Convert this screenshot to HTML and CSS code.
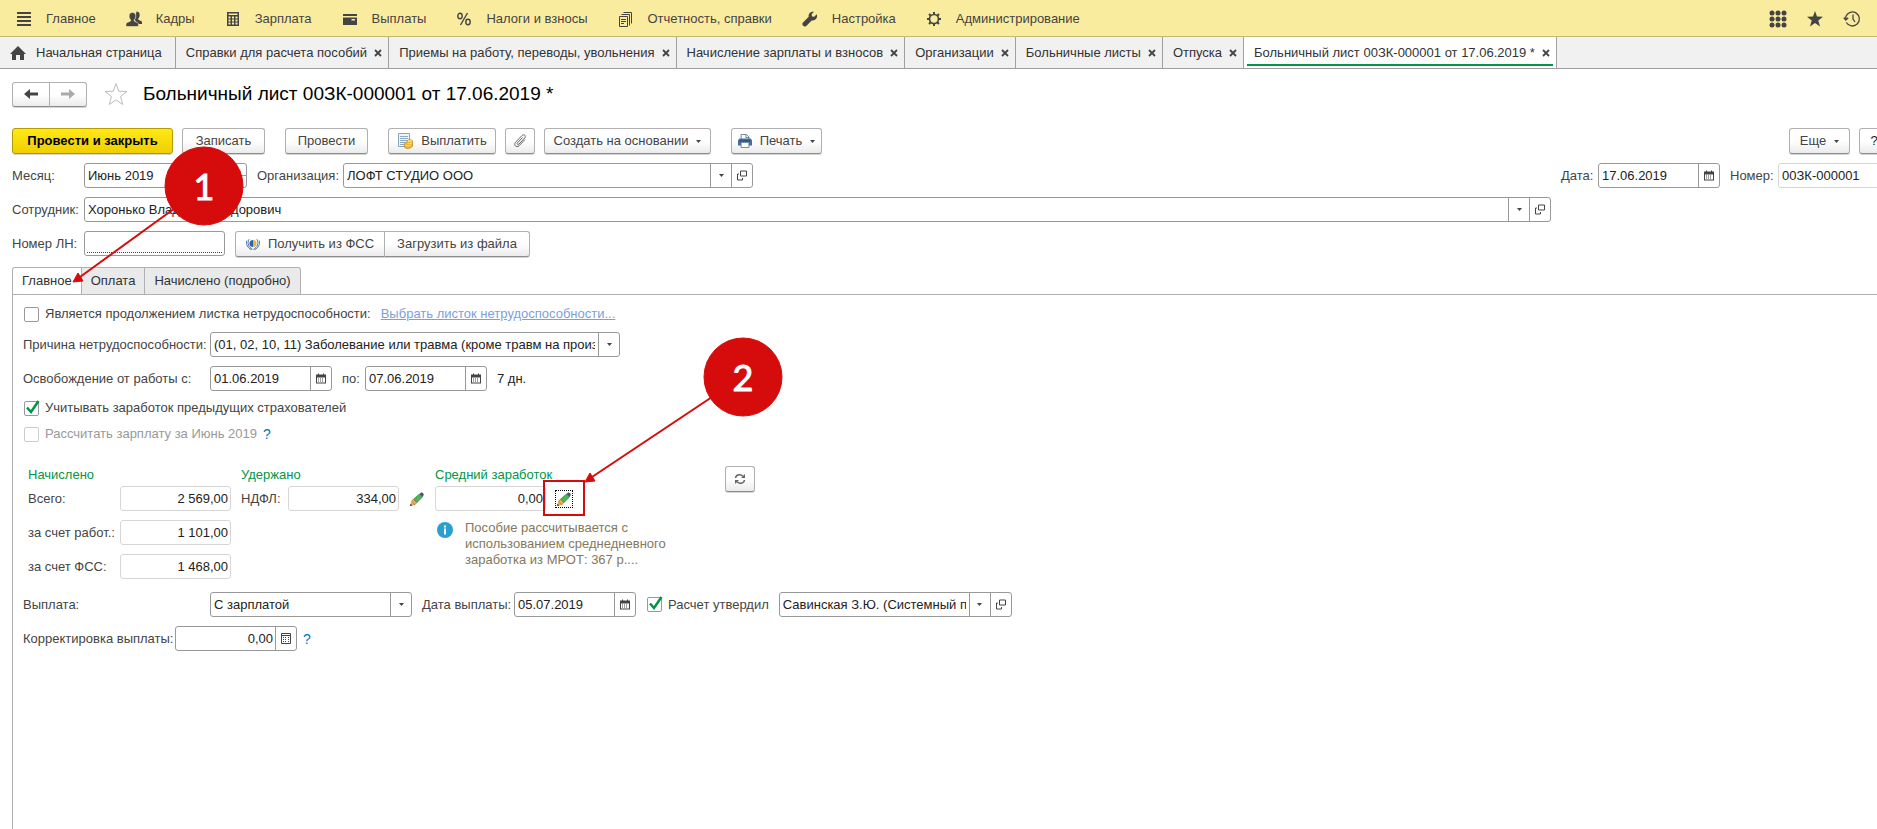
FILE: index.html
```html
<!DOCTYPE html>
<html lang="ru">
<head>
<meta charset="utf-8">
<title>Больничный лист 00ЗК-000001 от 17.06.2019</title>
<link rel="stylesheet" href="styles.css">
</head>
<body>
<svg class="sprite" aria-hidden="true">
  <symbol id="i-drop" viewBox="0 0 5 3"><path d="M0 0h5L2.500 3z" fill="#444"/></symbol>
  <symbol id="i-open" viewBox="0 0 10 10"><path d="M3.500 0.500h6v5h-6zM2 3.500H.5v6h5V7.500" fill="none" stroke="#444"/></symbol>
  <symbol id="i-cal" viewBox="0 0 10 10"><path d="M0 1h2V0h1v1h4V0h1v1h2v9H0z" fill="#444"/><path d="M1 4h8v5H1z" fill="#fff"/><path d="M2 5h1v1H2zm2 0h1v1H4zm2 0h1v1H6zM2 7h1v1H2zm2 0h1v1H4zm2 0h1v1H6z" fill="#444"/></symbol>
  <symbol id="i-calc" viewBox="0 0 10 11"><path d="M.5.500h9v10h-9zM1 2.500h8" fill="none" stroke="#444"/><path d="M2 4h1v1H2zm2 0h1v1H4zm3 0h1v1H7zM2 6h1v1H2zm2 0h1v1H4zm3 0h1v1H7zM2 8h1v1H2zm2 0h1v1H4zm3 0h1v1H7z" fill="#444"/></symbol>
  <symbol id="i-x" viewBox="0 0 8 8"><path d="M1 1l6 6M7 1L1 7" stroke="#444" stroke-width="1.800"/></symbol>
  <symbol id="i-pencil" viewBox="0 0 16 16"><path d="M1 15l1.200-4.500L5.500 14z" fill="#f0ad4e"/><path d="M1 15l.6-2.300 1.700 1.700z" fill="#333"/><path d="M4.500 8.200L10.500 3l3 3-5.800 5.800z" fill="#4eb656" stroke="#2f7f45" stroke-width=".7"/><path d="M2.500 10l2-1.800 3.200 3.300L5.500 14z" fill="#f0ad4e" stroke="#916324" stroke-width=".6"/><path d="M10.500 3l1.700-1.500c1-.6 3 1.200 2.500 2.500L13.500 6z" fill="#44566a"/></symbol>
</svg>

<div class="window">
  <nav class="menu" aria-label="Разделы">
    <a href="#" class="menu-item"><svg viewBox="0 0 16 16"><path d="M1 2h14M1 6h14M1 10h14M1 14h14" stroke="#444" stroke-width="1.800"/></svg>Главное</a>
    <a href="#" class="menu-item"><svg viewBox="0 0 16 16"><path d="M10.500.500c2.300 0 3.300 1.600 3.200 3.500 0 1.500-.6 2.800-1.400 3.500v1.300l3.200 1.500c.4.200.5.500.5 1V13h-4.500L9 9z" fill="#444"/><path d="M6.500 1.500c2.400 0 3.400 1.600 3.300 3.600 0 1.600-.7 2.900-1.500 3.600v1.400l3.300 1.600c.6.300.8.700.8 1.400v2.400H0v-2.400c0-.7.300-1.100.9-1.400l3.700-1.600V8.700C3.700 8 3.200 6.700 3.100 5.100 3 3.100 4.100 1.500 6.500 1.500z" fill="#444" stroke="#faec9f" stroke-width=".6"/></svg>Кадры</a>
    <a href="#" class="menu-item"><svg viewBox="0 0 16 16"><path d="M2 1h12v14H2z" fill="#444"/><path d="M3.500 2.500h9V4h-9zM3.500 5.500h2v2h-2zm3.500 0h2v2H7zm3.500 0h2v2h-2zM3.500 8.500h2v2h-2zm3.500 0h2v2H7zm3.500 0h2v2h-2zM3.500 11.500h2v2h-2zm3.500 0h2v2H7zm3.500 0h2v2h-2z" fill="#faec9f"/></svg>Зарплата</a>
    <a href="#" class="menu-item"><svg viewBox="0 0 16 16"><path d="M1 3h14v2H1zM1 6.500h14V14H1z" fill="#444"/><path d="M9.500 8H13v1.500H9.500z" fill="#faec9f"/></svg>Выплаты</a>
    <a href="#" class="menu-item"><svg viewBox="0 0 16 16"><g fill="none" stroke="#444" stroke-width="1.400"><ellipse cx="4" cy="5" rx="2.200" ry="2.700"/><ellipse cx="12" cy="11" rx="2.200" ry="2.700"/><path d="M11.500 2l-7 12"/></g></svg>Налоги и взносы</a>
    <a href="#" class="menu-item"><svg viewBox="0 0 16 16"><g fill="none" stroke="#444"><path d="M1.500 5.500h8v10h-8zM3.500 3.500h8v11M5.500 1.500h8v11M3 8.500h5M3 10.500h5M3 12.500h3"/></g></svg>Отчетность, справки</a>
    <a href="#" class="menu-item"><svg viewBox="0 0 16 16"><path d="M14.800 3.300l-2.600 2.500-2.200-.4-.4-2.200 2.400-2.400c-2-.7-6 .7-5.300 5L.8 11.700c-1.600 2 1.500 5 3.500 3.300l5.400-5.600c4 .8 6.200-2.600 5.100-6.100z" fill="#444"/></svg>Настройка</a>
    <a href="#" class="menu-item"><svg viewBox="0 0 16 16"><circle cx="8" cy="8" r="4.500" fill="none" stroke="#444" stroke-width="1.700"/><path d="M8 1v2.500M8 12.500V15M1 8h2.500M12.500 8H15M3 3l1.800 1.800M11.200 11.200L13 13M3 13l1.800-1.800M11.200 4.800L13 3" stroke="#444" stroke-width="2"/></svg>Администрирование</a>
    <div class="menu-tools">
      <button aria-label="Все функции"><svg viewBox="0 0 18 18"><g fill="#444"><circle cx="3" cy="3" r="2.500"/><circle cx="9" cy="3" r="2.500"/><circle cx="15" cy="3" r="2.500"/><circle cx="3" cy="9" r="2.500"/><circle cx="9" cy="9" r="2.500"/><circle cx="15" cy="9" r="2.500"/><circle cx="3" cy="15" r="2.500"/><circle cx="9" cy="15" r="2.500"/><circle cx="15" cy="15" r="2.500"/></g></svg></button>
      <button aria-label="Избранное"><svg viewBox="0 0 18 18"><path d="M9 1l2 5.600 6 .2-4.700 3.700L14 16.500 9 13l-5 3.500 1.700-6L1 6.800l6-.2z" fill="#444"/></svg></button>
      <button aria-label="История"><svg viewBox="0 0 18 18"><path d="M3.300 12.500a7 7 0 1 0-.5-6v3M.8 7.500l2 2.500 2.400-2.200M10 4.500V9l2 3" fill="none" stroke="#444" stroke-width="1.300"/></svg></button>
    </div>
  </nav>

  <nav class="tabs" aria-label="Открытые окна">
    <div class="tab home"><svg class="home-icon" viewBox="0 0 16 14"><path d="M8 0l8 8h-2v6h-4V9H6v5H2V8H0z" fill="#444"/></svg><a href="#">Начальная страница</a></div>
    <div class="tab"><a href="#">Справки для расчета пособий</a><button aria-label="Закрыть"><svg><use href="#i-x"/></svg></button></div>
    <div class="tab"><a href="#">Приемы на работу, переводы, увольнения</a><button aria-label="Закрыть"><svg><use href="#i-x"/></svg></button></div>
    <div class="tab"><a href="#">Начисление зарплаты и взносов</a><button aria-label="Закрыть"><svg><use href="#i-x"/></svg></button></div>
    <div class="tab"><a href="#">Организации</a><button aria-label="Закрыть"><svg><use href="#i-x"/></svg></button></div>
    <div class="tab"><a href="#">Больничные листы</a><button aria-label="Закрыть"><svg><use href="#i-x"/></svg></button></div>
    <div class="tab"><a href="#">Отпуска</a><button aria-label="Закрыть"><svg><use href="#i-x"/></svg></button></div>
    <div class="tab active"><a href="#">Больничный лист 00ЗК-000001 от 17.06.2019 *</a><button aria-label="Закрыть"><svg><use href="#i-x"/></svg></button></div>
  </nav>

  <main class="form">
    <header class="heading">
      <div class="group">
        <button class="btn nav" aria-label="Назад"><svg viewBox="0 0 14 12"><path d="M0 6l6-5v3.500h8v3H6V11z" fill="#444"/></svg></button>
        <button class="btn nav" aria-label="Вперед"><svg viewBox="0 0 14 12"><path d="M14 6L8 1v3.500H0v3h8V11z" fill="#aaa"/></svg></button>
      </div>
      <button class="fav" aria-label="Добавить в избранное"><svg viewBox="0 0 24 24"><path d="M12 1.500l2.800 7.800 8.200.2-6.500 5 2.300 8L12 17.800 5.200 22.500l2.300-8L1 9.500l8.200-.2z" fill="#fff" stroke="#b9bdc4"/></svg></button>
      <h1>Больничный лист 00ЗК-000001 от 17.06.2019 *</h1>
    </header>

    <div class="bar">
      <button class="btn primary">Провести и закрыть</button>
      <button class="btn w-save">Записать</button>
      <button class="btn w-save apart">Провести</button>
      <button class="btn w-pay apart"><svg class="i16" viewBox="0 0 16 16"><path d="M1.500.5h11v13h-11z" fill="#eef4f9" stroke="#8aa3b8"/><path d="M3 3.500h8M3 5.500h8M3 7.500h8M3 9.500h5M3 11.500h4" stroke="#8fabc4"/><path d="M7.500 11c0-1.500 2.500-1.800 2.500-1.500V8c0-1.700 5.500-1.700 5.500 0v5c0 1-1.500 1.300-1.500 1.300-1 1.700-6.500 1.500-6.500-.3z" fill="#eeb52d" stroke="#b57f17" stroke-width=".7"/><ellipse cx="12.700" cy="8" rx="2.300" ry=".9" fill="#ffe277"/><path d="M8 12c2 1.300 4.500 1 6 0M10.500 10c1.500.8 3 .8 4.500 0" fill="none" stroke="#fff0a0" stroke-width=".8"/></svg>Выплатить</button>
      <button class="btn w-icon" aria-label="Файлы"><svg class="i16" viewBox="0 0 16 16"><path d="M10.500 4.500L5.500 9.800c-1 1.200.4 2.300 1.400 1.300L12.700 5c1.800-2.300-.8-4.300-2.700-2.500L3.500 9.300c-2.200 2.700.7 5.700 3.500 3.500l6-6.300" fill="none" stroke="#666"/></svg></button>
      <button class="btn w-create">Создать на основании<svg class="drop"><use href="#i-drop"/></svg></button>
      <button class="btn w-print apart"><svg class="i14" viewBox="0 0 16 16"><path d="M3.500 6V.5h6l3 3V6" fill="#fff" stroke="#58799a"/><path d="M9 .5V4h3.500" fill="none" stroke="#58799a"/><path d="M1.500 5h13L16 7v6H0V7z" fill="#456f98"/><path d="M2 8h12" stroke="#1f4468" stroke-width="1.200"/><path d="M3.500 9.500h9v6h-9z" fill="#fff" stroke="#58799a"/></svg>Печать<svg class="drop"><use href="#i-drop"/></svg></button>
      <button class="btn w-more push">Еще<svg class="drop"><use href="#i-drop"/></svg></button>
      <button class="btn w-icon dark">?</button>
    </div>

    <div class="row">
      <label class="lb-main" for="month">Месяц:</label>
      <div class="field w-month"><input id="month" value="Июнь 2019"><button aria-label="Выбрать месяц"><svg class="drop"><use href="#i-drop"/></svg></button><div class="spin"><button aria-label="Следующий"></button><button aria-label="Предыдущий"></button></div></div>
      <label class="lb-org" for="org">Организация:</label>
      <div class="field w-org"><select id="org"><option>ЛОФТ СТУДИО ООО</option></select><span class="side"><svg class="drop"><use href="#i-drop"/></svg></span><button aria-label="Открыть организацию"><svg class="i10"><use href="#i-open"/></svg></button></div>
      <label class="push lb-date" for="date">Дата:</label>
      <div class="field w-date"><input id="date" value="17.06.2019"><button aria-label="Календарь"><svg class="i10"><use href="#i-cal"/></svg></button></div>
      <label class="lb-num" for="num">Номер:</label>
      <div class="field soft w-num"><input id="num" value="00ЗК-000001"></div>
    </div>

    <div class="row">
      <label class="lb-main" for="emp">Сотрудник:</label>
      <div class="field w-emp"><select id="emp"><option>Хоронько Владимир Федорович</option></select><span class="side"><svg class="drop"><use href="#i-drop"/></svg></span><button aria-label="Открыть сотрудника"><svg class="i10"><use href="#i-open"/></svg></button></div>
    </div>

    <div class="row">
      <label class="lb-main" for="ln">Номер ЛН:</label>
      <div class="field required w-ln"><input id="ln" value=""></div>
      <div class="group files">
        <button class="btn w-fss"><svg class="i14" viewBox="0 0 16 16"><path d="M8 3.500a4 4 0 0 0 0 8z" fill="#2e63a8"/><path d="M8 3.500a4 4 0 0 1 0 8z" fill="#f0b33c"/><path d="M3.500 2.500C1 7 3 12 7.500 14M1 4c-1.500 4 1 9 5.500 10.500M12.500 2.500c2.500 4.500.5 9.500-4 11.500M15 4c1.500 4-1 9-5.500 10.500" fill="none" stroke="#2e63a8"/></svg>Получить из ФСС</button>
        <button class="btn w-load">Загрузить из файла</button>
      </div>
    </div>

    <div class="subtabs" role="tablist">
      <button role="tab" aria-selected="true" class="on">Главное</button>
      <button role="tab">Оплата</button>
      <button role="tab">Начислено (подробно)</button>
    </div>

    <section class="panel">
      <div class="line check">
        <input type="checkbox" id="cont"><label for="cont">Является продолжением листка нетрудоспособности:</label>
        <a href="#" class="pick">Выбрать листок нетрудоспособности...</a>
      </div>
      <div class="line">
        <label class="lb-wide" for="cause">Причина нетрудоспособности:</label>
        <div class="field w-cause"><select id="cause"><option>(01, 02, 10, 11) Заболевание или травма (кроме травм на производстве)</option></select><span class="side"><svg class="drop"><use href="#i-drop"/></svg></span></div>
      </div>
      <div class="line">
        <label class="lb-wide" for="from">Освобождение от работы с:</label>
        <div class="field w-date"><input id="from" value="01.06.2019"><button aria-label="Календарь"><svg class="i10"><use href="#i-cal"/></svg></button></div>
        <label class="lb-to" for="to">по:</label>
        <div class="field w-date"><input id="to" value="07.06.2019"><button aria-label="Календарь"><svg class="i10"><use href="#i-cal"/></svg></button></div>
        <span class="days">7 дн.</span>
      </div>
      <div class="line check">
        <input type="checkbox" id="prev" checked><label for="prev">Учитывать заработок предыдущих страхователей</label>
      </div>
      <div class="line check">
        <input type="checkbox" id="calc" disabled><label for="calc">Рассчитать зарплату за Июнь 2019</label>
        <a href="#" class="help">?</a>
      </div>

      <div class="totals">
        <div class="col">
          <h2>Начислено</h2>
          <div class="sum"><label class="lb-sum" for="s1">Всего:</label><div class="field soft w-sum"><input id="s1" value="2 569,00"></div></div>
          <div class="sum"><label class="lb-sum" for="s2">за счет работ.:</label><div class="field soft w-sum"><input id="s2" value="1 101,00"></div></div>
          <div class="sum"><label class="lb-sum" for="s3">за счет ФСС:</label><div class="field soft w-sum"><input id="s3" value="1 468,00"></div></div>
        </div>
        <div class="col">
          <h2>Удержано</h2>
          <div class="sum"><label class="lb-tax" for="s4">НДФЛ:</label><div class="field soft w-sum"><input id="s4" value="334,00"></div><button class="edit" aria-label="Изменить НДФЛ"><svg class="i16"><use href="#i-pencil"/></svg></button></div>
        </div>
        <div class="col">
          <h2>Средний заработок</h2>
          <div class="sum"><div class="field soft w-sum"><input id="s5" aria-label="Средний заработок" value="0,00"></div><button class="edit marked" aria-label="Изменить средний заработок"><svg class="i16"><use href="#i-pencil"/></svg></button></div>
          <div class="note"><svg class="i16" viewBox="0 0 16 16"><circle cx="8" cy="8" r="8" fill="#2b9fd0"/><path d="M7 3.500h2v2H7zM7 6.500h2v6H7z" fill="#fff"/></svg><p>Пособие рассчитывается с использованием среднедневного заработка из МРОТ: 367 р....</p></div>
        </div>
        <button class="btn w-icon" aria-label="Пересчитать"><svg class="i12" viewBox="0 0 12 12"><path d="M1.500 5c.5-3.500 5-4.500 7.500-1.800M10.500 7c-.5 3.500-5 4.500-7.500 1.800" fill="none" stroke="#666" stroke-width="1.500"/><path d="M11 1v4H7zM1 11V7h4z" fill="#666"/></svg></button>
      </div>

      <div class="line">
        <label class="lb-wide" for="pay">Выплата:</label>
        <div class="field w-pay-kind"><select id="pay"><option>С зарплатой</option></select><span class="side"><svg class="drop"><use href="#i-drop"/></svg></span></div>
        <label class="lb-paydate" for="paydate">Дата выплаты:</label>
        <div class="field w-date"><input id="paydate" value="05.07.2019"><button aria-label="Календарь"><svg class="i10"><use href="#i-cal"/></svg></button></div>
        <div class="check approve"><input type="checkbox" id="ok" checked><label for="ok">Расчет утвердил</label></div>
        <div class="field w-user"><select aria-label="Утвердил"><option>Савинская З.Ю. (Системный программист)</option></select><span class="side"><svg class="drop"><use href="#i-drop"/></svg></span><button aria-label="Открыть пользователя"><svg class="i10"><use href="#i-open"/></svg></button></div>
      </div>
      <div class="line">
        <label class="lb-corr" for="corr">Корректировка выплаты:</label>
        <div class="field right w-date"><input id="corr" value="0,00"><button aria-label="Калькулятор"><svg class="i10"><use href="#i-calc"/></svg></button></div>
        <a href="#" class="help">?</a>
      </div>
    </section>
  </main>

  <svg class="callouts" viewBox="0 0 800 540" aria-hidden="true">
    <g fill="#d60b0b" stroke="#d60b0b">
      <path d="M204 187L80 277" stroke-width="2"/><path d="M73 282l5-9 5 8z"/>
      <path d="M742 377L592 477" stroke-width="2"/><path d="M585 482l5-9 5 8z"/>
      <circle cx="204" cy="186" r="39"/><circle cx="743" cy="377" r="39"/>
      <path d="M544 481h40v34h-40z" fill="none" stroke-width="2"/>
    </g>
    <text x="204" y="200">1</text><text x="743" y="391">2</text>
  </svg>
</div>
</body>
</html>
```
FILE: styles.css
```css
* { box-sizing: border-box; }
body { margin: 0; background: #fff; color: #444; font: 13px/16px "Liberation Sans", Arial, sans-serif; }
button, input, select { font: inherit; color: inherit; margin: 0; }
button { padding: 0; border: 0; background: none; }
a { color: inherit; text-decoration: none; }
svg { display: block; flex: none; }
.sprite { position: absolute; width: 0; height: 0; }
.window { position: relative; overflow: hidden; min-height: 100vh; }

.menu { display: flex; align-items: center; gap: 30px; height: 37px; padding: 1px 16px 0; background: #faec9f; border-bottom: 1px solid #c5b976; }
.menu-item { display: flex; align-items: center; gap: 14px; white-space: nowrap; }
.menu-item svg { width: 16px; height: 16px; }
.menu-tools { display: flex; gap: 19px; margin-left: auto; }
.menu-tools svg { width: 18px; height: 18px; }

.tabs { display: flex; height: 32px; background: #f1f1f1; border-bottom: 1px solid #a0a0a0; }
.tab { position: relative; display: flex; align-items: center; gap: 7px; padding: 0 6px 0 10px; border-right: 1px solid #a0a0a0; white-space: nowrap; color: #333; }
.tab svg { width: 8px; height: 8px; }
.tab .home-icon { width: 16px; height: 14px; }
.tab.home { gap: 10px; padding-right: 13px; }
.tab.active { background: #fff; }
.tab.active::after { content: ""; position: absolute; left: 3px; right: 3px; bottom: 2px; height: 2px; background: #009646; }

.form { display: flex; flex-direction: column; margin-right: -12px; padding: 12px 0 0 12px; }
.heading { display: flex; align-items: center; margin-bottom: 21px; height: 26px; }
.heading h1 { margin: 0 0 0 15px; font-size: 19px; line-height: 24px; font-weight: normal; color: #000; }
.group { display: flex; }
.group .btn:first-child { border-radius: 3px 0 0 3px; }
.group .btn:last-child { border-radius: 0 3px 3px 0; margin-left: -1px; }
.group .nav { width: 38px; height: 25px; }
.nav svg { width: 14px; height: 12px; }
.fav { margin-left: 17px; }
.fav svg { width: 24px; height: 24px; }

.btn { display: flex; align-items: center; justify-content: center; gap: 8px; height: 26px; border: 1px solid #b0b0b0; border-bottom-color: #8c8c8c; border-radius: 3px; background: linear-gradient(#fff 50%, #ebebeb); box-shadow: 0 1px 0 #d5d5d5; white-space: nowrap; }
.primary { width: 161px; border-color: #b39b00; background: linear-gradient(#ffe817, #f0cf00); color: #000; font-weight: bold; }
.dark { color: #222; }
.bar { display: flex; gap: 9px; margin-bottom: 9px; }
.apart { margin-left: 11px; }
.push { margin-left: auto; }
.w-save { width: 83px; }
.w-pay { width: 108px; }
.w-icon { width: 30px; }
.w-create { width: 167px; }
.w-print { width: 91px; }
.w-more { width: 61px; }
.w-fss { width: 150px; }
.w-load { width: 146px; }
.drop { width: 5px; height: 3px; }
.i10 { width: 10px; height: 11px; }
.i12 { width: 12px; height: 12px; }
.i14 { width: 14px; height: 14px; }
.i16 { width: 16px; height: 16px; }

.row { display: flex; align-items: center; height: 25px; margin-bottom: 9px; }
.files { margin-left: 10px; }
label { white-space: nowrap; }
.lb-main { width: 72px; }
.lb-org { width: 86px; margin-left: 10px; }
.lb-date { width: 37px; }
.lb-num { width: 48px; margin-left: 10px; }
.lb-wide { width: 187px; }
.lb-to { width: 23px; margin-left: 10px; }
.lb-sum { width: 92px; }
.lb-tax { width: 47px; }
.lb-paydate { width: 92px; margin-left: 10px; }
.lb-corr { width: 152px; }

.field { display: flex; height: 25px; border: 1px solid #999; border-radius: 3px; background: #fff; color: #222; }
.field input, .field select { flex: 1; min-width: 0; width: 0; height: 100%; padding: 0 3px; border: 0; outline: 0; background: none; appearance: none; }
.field > button, .side { display: flex; align-items: center; justify-content: center; width: 21px; border-left: 1px solid #999; }
.soft { border-color: #d6d6d6; }
.right input, .w-sum input { text-align: right; padding-right: 2px; }
.spin { display: flex; flex-direction: column; width: 21px; border-left: 1px solid #999; }
.spin button { flex: 1; }
.spin button + button { border-top: 1px solid #999; }
.required { padding: 0 2px 2px; }
.required input { border-bottom: 1px dotted #d60b0b; }
.w-month { width: 163px; }
.w-org { width: 410px; }
.w-date { width: 122px; }
.w-num { width: 111px; }
.w-emp { width: 1467px; }
.w-ln { width: 141px; }
.w-cause { width: 410px; }
.w-sum { width: 111px; }
.w-pay-kind { width: 202px; }
.w-user { width: 233px; }

.subtabs { display: flex; margin: 2px 0 -1px; }
.subtabs button { height: 28px; padding: 0 9px; border: 1px solid #b0b0b0; border-left-width: 0; background: #eaeaea; color: #333; }
.subtabs button:last-child { border-top-right-radius: 3px; }
.subtabs .on { border-left-width: 1px; border-bottom-color: #fff; border-top-left-radius: 3px; background: #fff; }

.panel { min-height: calc(100vh - 294px); padding: 11px 0 0 10px; border: solid #b0b0b0; border-width: 1px 0 0 1px; }
.line { display: flex; align-items: center; margin-bottom: 9px; }
.check { display: flex; align-items: center; height: 16px; margin-bottom: 10px; }
.check input { position: relative; appearance: none; width: 15px; height: 15px; margin: 0 6px 0 1px; border: 1px solid #999; border-radius: 2px; background: #fff; }
.check input:checked::after { content: ""; position: absolute; left: 0; top: -2px; width: 15px; height: 15px; background: url("data:image/svg+xml,%3Csvg xmlns='http://www.w3.org/2000/svg' viewBox='0 0 15 15'%3E%3Cpath d='M2 7.500l4 4.500L13.500 1' fill='none' stroke='%23009646' stroke-width='2.500'/%3E%3C/svg%3E"); }
.check input:disabled { border-color: #ccc; }
.check input:disabled + label { color: #999; }
.pick { margin-left: 10px; color: #7b9fdc; text-decoration: underline; }
.help { margin-left: 6px; color: #0078b8; font-size: 14px; }
.days { margin-left: 10px; color: #222; }

.totals { display: flex; gap: 10px; height: 126px; margin: 24px 0 0 5px; }
.col { display: flex; flex-direction: column; }
.col h2 { margin: 1px 0 3px; font-size: 13px; line-height: 16px; font-weight: normal; color: #009646; }
.sum { display: flex; align-items: center; height: 25px; margin-bottom: 9px; }
.edit { width: 16px; height: 16px; margin-left: 10px; }
.marked { outline: 1px dotted #000; }
.note { display: flex; align-items: flex-start; gap: 12px; padding-left: 2px; width: 280px; }
.note p { width: 220px; margin: 0; color: #85785a; }
.note svg { margin-top: 2px; }
.approve { margin: 0 10px; }

.callouts { position: absolute; left: 0; top: 0; width: 800px; height: 540px; pointer-events: none; }
.callouts text { fill: #fff; stroke: #fff; font: 36px Lato, sans-serif; text-anchor: middle; }
```
